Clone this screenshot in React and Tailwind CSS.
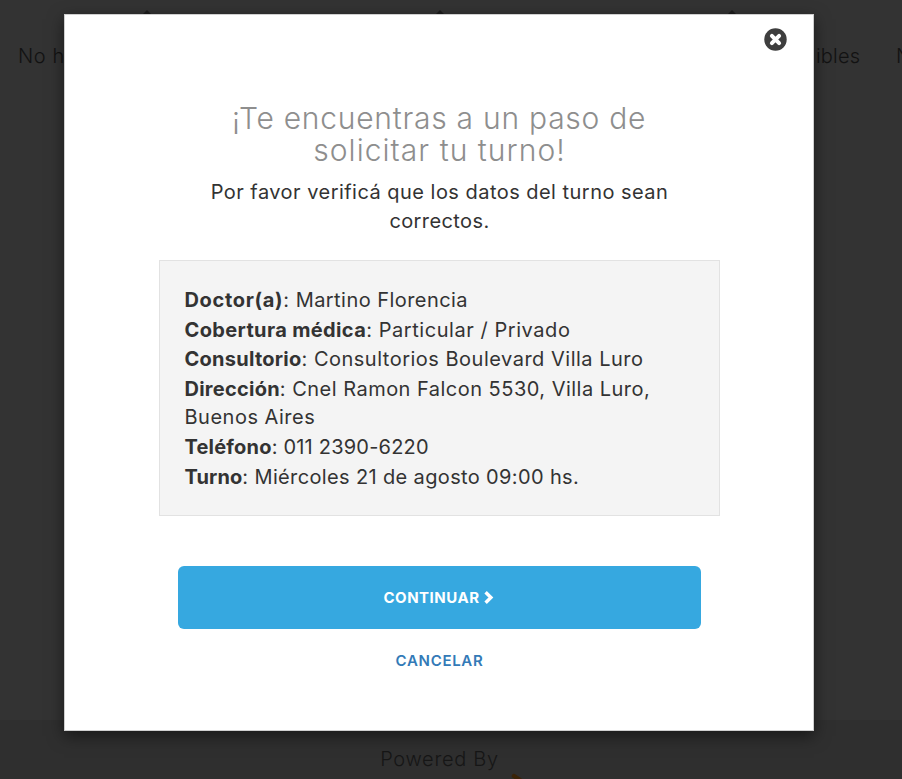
function Row({ label, children, labelClass = "", valueClass = "", className = "" }) {
  return (
    <div className={`leading-[28px] whitespace-nowrap ${className}`}>
      <b className={`font-bold ${labelClass}`}>{label}</b>
      <span className={valueClass}>: {children}</span>
    </div>
  );
}

function CloseIcon() {
  return (
    <svg className="size-[23px]" viewBox="0 0 23 23">
      <circle cx="11.5" cy="11.5" r="11.2" fill="#3e3e3e" />
      <path d="M7.9 7.9 L15.1 15.1 M15.1 7.9 L7.9 15.1" stroke="#fff" strokeWidth="4" strokeLinecap="round" />
    </svg>
  );
}

function Chevron() {
  return (
    <svg className="h-[15px] w-[11px]" viewBox="0 0 11 15">
      <path d="M2.6 2.3 L7.9 7.5 L2.6 12.7" fill="none" stroke="#fff" strokeWidth="3.4" />
    </svg>
  );
}

function Backdrop() {
  return (
    <div className="flex h-[779px] flex-col overflow-hidden bg-[#333333] text-[20px] font-[360] text-[#121212]">
      <div className="flex h-[20px] shrink-0 pt-[10px]">
        <i className="ml-[142px] h-[5px] w-[10px] bg-[#1c1c1c] [clip-path:polygon(50%_0,100%_100%,0_100%)]" />
        <i className="ml-[283px] h-[5px] w-[10px] bg-[#1c1c1c] [clip-path:polygon(50%_0,100%_100%,0_100%)]" />
        <i className="ml-[282px] h-[5px] w-[10px] bg-[#1c1c1c] [clip-path:polygon(50%_0,100%_100%,0_100%)]" />
      </div>
      <div className="flex w-[902px] shrink-0 overflow-hidden pt-[22px] leading-[28px] whitespace-nowrap">
        <span className="ml-[18px] w-[798px] shrink-0 tracking-[0.6px]">No h</span>
        <span className="w-[80px] shrink-0 tracking-[0.2px]">ibles</span>
        <span className="shrink-0">N</span>
      </div>
      <div className="mt-auto flex h-[59px] flex-col items-center bg-[#2f2f2f] pt-[25px] pr-[23px]">
        <span className="leading-[28px] tracking-[0.7px] text-[#161616]">Powered By</span>
        <svg className="ml-[157px] h-[6px] w-[14px] shrink-0" viewBox="0 0 14 6">
          <path d="M3 3 L9 7" stroke="#3a2308" strokeWidth="4.5" strokeLinecap="round" />
        </svg>
      </div>
    </div>
  );
}

export default function App() {
  return (
    <div className="relative h-[779px] w-[902px] overflow-hidden font-['Inter',sans-serif]">
      <Backdrop />
      <div className="absolute top-[14px] left-[64px] flex h-[717px] w-[750px] flex-col items-center border border-[#cfcfcf] bg-white shadow-[0_5px_15px_rgba(0,0,0,0.5)]">
        <div className="flex h-[37px] w-full justify-end pt-[13px] pr-[26px]">
          <CloseIcon />
        </div>
        <h3 className="mt-[50px] text-center text-[30px] leading-[32px] font-[350] text-[#8e8e8e]">
          <div className="tracking-[0.75px]">¡Te encuentras a un paso de</div>
          <div className="pl-[1px] tracking-[1.05px]">solicitar tu turno!</div>
        </h3>
        <p className="mt-[12px] pl-[1px] text-center text-[20px] leading-[29px] font-[370] text-[#333333]">
          <span className="block tracking-[0.47px]">Por favor verificá que los datos del turno sean</span>
          <span className="block tracking-[0.4px]">correctos.</span>
        </p>
        <div className="mt-[24px] h-[256px] w-[561px] border border-[#e2e2e2] bg-[#f4f4f4] pt-[25px] pr-[20px] pl-[25px] text-[20px] font-[370] text-[#333333]">
          <Row className="mb-[2px]" label="Doctor(a)" labelClass="tracking-[0.68px]" valueClass="tracking-[0.45px]">Martino Florencia</Row>
          <Row className="mb-[1px]" label="Cobertura médica" labelClass="tracking-[0.36px]" valueClass="tracking-[0.56px]">Particular / Privado</Row>
          <Row className="mb-[2px]" label="Consultorio" labelClass="tracking-[0.25px]" valueClass="tracking-[0.5px]">Consultorios Boulevard Villa Luro</Row>
          <Row label="Dirección" labelClass="tracking-[0.25px]" valueClass="tracking-[0.48px]">Cnel Ramon Falcon 5530, Villa Luro,</Row>
          <div className="mb-[2px] leading-[28px] tracking-[0.5px]">Buenos Aires</div>
          <Row className="mb-[2px]" label="Teléfono" labelClass="tracking-[0.2px]" valueClass="tracking-[0.2px]">011 2390-6220</Row>
          <Row label="Turno" labelClass="tracking-[0.1px]" valueClass="tracking-[0.36px]">Miércoles 21 de agosto 09:00 hs.</Row>
        </div>
        <button className="mt-[50px] flex h-[63px] w-[523px] shrink-0 items-center justify-center gap-[4px] rounded-[6px] bg-[#36a8e0] text-[15px] font-bold text-white">
          <span className="pt-[1px] tracking-[0.5px]">CONTINUAR</span>
          <Chevron />
        </button>
        <a className="mt-[21px] pl-[1px] text-[15px] leading-[22px] font-semibold tracking-[0.7px] text-[#337ab7]">CANCELAR</a>
      </div>
    </div>
  );
}
